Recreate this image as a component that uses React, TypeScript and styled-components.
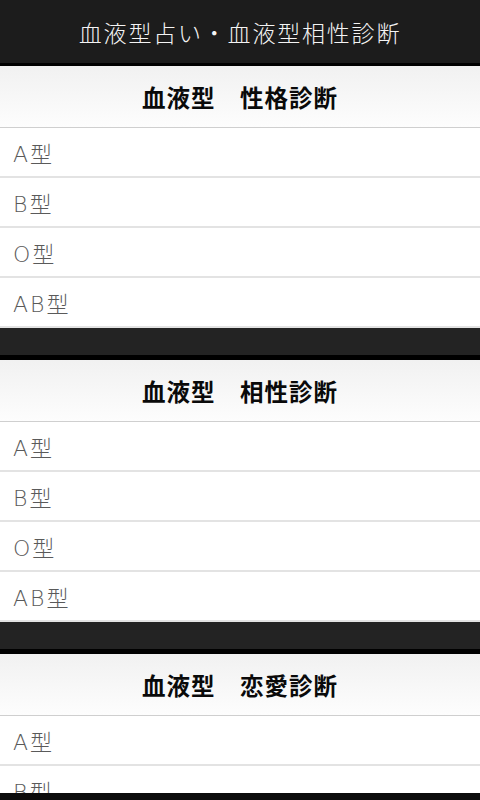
import styled, { createGlobalStyle } from "styled-components";

const GlobalStyle = createGlobalStyle`
  html, body {
    margin: 0;
    padding: 0;
    background: #ffffff;
    font-family: "Noto Sans CJK JP", "Noto Sans", sans-serif;
  }
`;

const Page = styled.div`
  display: flex;
  flex-direction: column;
  width: 480px;
`;

const TopBar = styled.header`
  display: flex;
  align-items: center;
  justify-content: center;
  height: 63px;
  background: #1c1c1c;
  border-bottom: 3px solid #000;
  color: #f4f4f4;
  font-size: 23px;
  font-weight: 300;
  letter-spacing: 1.8px;
`;

const Section = styled.section`
  display: flex;
  flex-direction: column;
`;

const SectionTitle = styled.h2`
  margin: 0;
  display: flex;
  align-items: center;
  justify-content: center;
  height: 61px;
  border-bottom: 1px solid #cfcfcf;
  background: linear-gradient(#f1f1f1, #fdfdfd);
  color: #0a0a0a;
  font-size: 23.5px;
  font-weight: 700;
  letter-spacing: 1px;
  white-space: pre;
`;

// reset list styles
const List = styled.ul`
  list-style: none;
  margin: 0;
  padding: 0;
`;

const Row = styled.li`
  display: flex;
  align-items: center;
  height: 48px;
  padding-left: 13px;
  border-bottom: 2px solid #e3e3e3;
  background: #fff;
  color: #5a5a5a;
  font-family: "DejaVu Sans", "Noto Sans CJK JP", sans-serif;
  font-size: 22px;
  font-weight: 200;
  letter-spacing: 2px;
`;

const Divider = styled.div`
  height: 27px;
  background: #232323;
  border-bottom: 5px solid #000;
`;

const Footer = styled.div`
  position: fixed;
  left: 0;
  right: 0;
  bottom: 0;
  height: 7px;
  background: #0c0c0c;
`;

const sections = ["性格診断", "相性診断", "恋愛診断"];
const types = ["A型", "B型", "O型", "AB型"];

export default function App() {
  return (
    <>
      <GlobalStyle />
      <Page>
        <TopBar>血液型占い・血液型相性診断</TopBar>
        {sections.map((name, i) => (
          <Section key={name}>
            <SectionTitle>{`血液型　${name}`}</SectionTitle>
            <List>
              {types.map((t) => (
                <Row key={t}>{t}</Row>
              ))}
            </List>
            {i < sections.length - 1 && <Divider />}
          </Section>
        ))}
      </Page>
      <Footer />
    </>
  );
}
